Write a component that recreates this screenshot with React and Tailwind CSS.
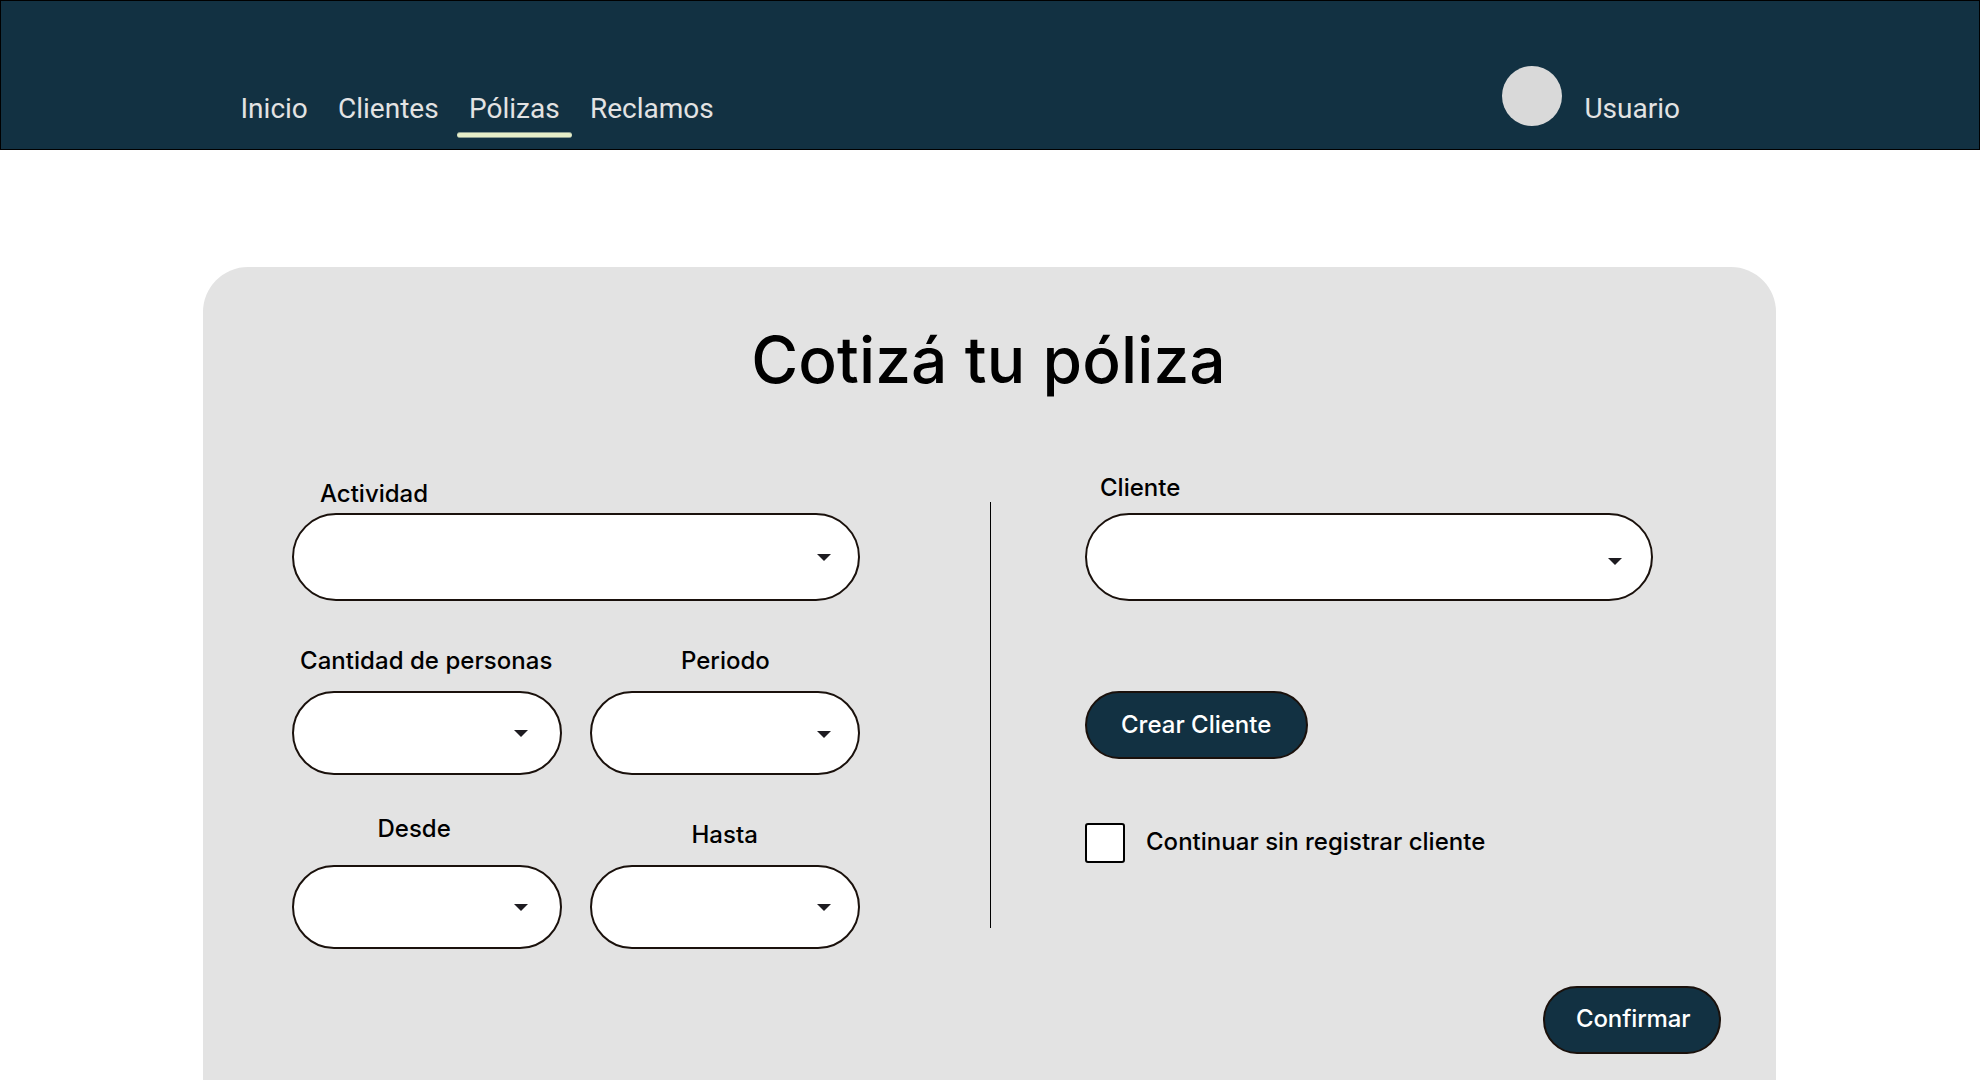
const navItems = [
  { label: "Inicio", className: "w-[97.5px]" },
  { label: "Clientes", className: "w-[131px]" },
  { label: "Pólizas", className: "w-[121px]", active: true },
  { label: "Reclamos", className: "" },
];

function Header() {
  return (
    <header className="flex h-[150px] border border-black bg-[#123142] pl-[239.5px] font-['Roboto',sans-serif] text-[28px] leading-[33px] text-[#e3e3e3]">
      <nav className="mt-[91px] flex">
        {navItems.map((item) => (
          <a key={item.label} className={item.className}>
            {item.label}
            {item.active && (
              <span className="-ml-3 mt-[7px] block h-[6px] w-[115px] rounded-[3px] border-y border-[#8b9c91] bg-[#e6eec8]" />
            )}
          </a>
        ))}
      </nav>
      <div className="mr-[299px] ml-auto flex">
        <span className="mt-[65px] size-[60px] rounded-full bg-[#d9d9d9]" />
        <span className="mt-[91px] ml-[22px]">Usuario</span>
      </div>
    </header>
  );
}

function Select({ className }) {
  return (
    <button className={`flex w-full justify-end rounded-full border-2 border-[#1a110c] bg-white ${className}`}>
      <svg width="14" height="7" viewBox="0 0 14 7" fill="#1d1b20">
        <path d="M0 0H14L7 7Z" />
      </svg>
    </button>
  );
}

function Field({ label, labelClass, selectClass, className = "" }) {
  return (
    <div className={`flex flex-col ${className}`}>
      <label className={labelClass}>{label}</label>
      <Select className={selectClass} />
    </div>
  );
}

export default function App() {
  return (
    <div className="h-[1080px] w-[1980px] overflow-hidden bg-white">
      <Header />
      <main className="mt-[117px] ml-[203px] flex h-[900px] w-[1573px] flex-col rounded-[45px] bg-[#e3e3e3] font-['Inter',sans-serif] text-2xl leading-[29px] font-medium text-black">
        <h1 className="mt-[54px] -ml-0.5 text-center text-[64px] leading-[77px] tracking-[0.13px]">Cotizá tu póliza</h1>

        <div className="mt-[75px] ml-[89px] flex">
          <section className="w-[568px] pt-[6px]">
            <Field label="Actividad" labelClass="ml-7" selectClass="mt-[5px] h-[88px] pt-[39px] pr-[27px]" />
            <div className="mt-[45px] grid grid-cols-2 gap-x-7">
              <Field
                label="Cantidad de personas"
                labelClass="ml-2 tracking-[0.04px]"
                selectClass="mt-4 h-[84px] pt-[37px] pr-8"
              />
              <Field label="Periodo" labelClass="ml-[91px]" selectClass="mt-4 h-[84px] pt-[38px] pr-[27px]" />
              <Field
                className="mt-[39px]"
                label="Desde"
                labelClass="ml-[85.5px]"
                selectClass="mt-[22px] h-[84px] pt-[37px] pr-8"
              />
              <Field
                className="mt-[45px]"
                label="Hasta"
                labelClass="ml-[101.5px]"
                selectClass="mt-4 h-[84px] pt-[37px] pr-[27px]"
              />
            </div>
          </section>

          <div className="mt-[29px] ml-[130px] h-[426px] w-px bg-black" />

          <section className="ml-[94px] w-[568px]">
            <Field label="Cliente" labelClass="ml-[15px]" selectClass="mt-[11px] h-[88px] pt-[43px] pr-[29px]" />
            <button className="mt-[90px] flex h-[68px] w-[223px] rounded-full border-2 border-[#1a110c] bg-[#123142] pt-[17px] pl-[34px] text-white">
              Crear Cliente
            </button>
            <div className="mt-16 flex">
              <span className="size-10 rounded-[3px] border-2 border-black bg-white" />
              <span className="mt-1 ml-[21px] tracking-[0.02px]">Continuar sin registrar cliente</span>
            </div>
          </section>
        </div>

        <button className="mt-[37px] mr-[55px] ml-auto flex h-[68px] w-[178px] rounded-full border-2 border-[#1a110c] bg-[#123142] pt-4 pl-[31px] tracking-[-0.12px] text-white">
          Confirmar
        </button>
      </main>
    </div>
  );
}
